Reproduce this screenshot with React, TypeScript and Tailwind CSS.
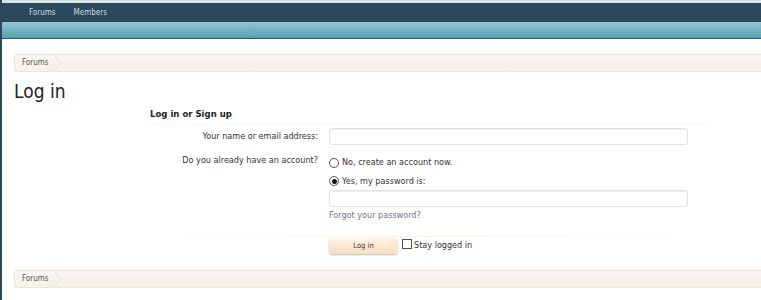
import React from "react";

function Crumb({ className = "" }: { className?: string }) {
  return (
    <div className={"flex items-center h-[18px] ml-[12px] rounded-l-[4px] border border-r-0 border-[#f2e4cf] bg-gradient-to-b from-[#f9f7f4] to-[#f3efe9] " + className}>
      <div className="relative flex items-center h-full pl-[7px] pr-[14px] text-[8px] text-[#555]">
        Forums
        <svg className="absolute right-0 top-0" width="10" height="16" viewBox="0 0 10 16">
          <path d="M1 0 L8 8 L1 16" fill="none" stroke="#efe6da" strokeWidth="1.2" />
        </svg>
      </div>
    </div>
  );
}

export default function App() {
  return (
    <div
      className="w-[761px] h-[300px] overflow-hidden bg-[#2b485c] pl-[2px]"
      style={{ fontFamily: '"DejaVu Sans Condensed", "DejaVu Sans", sans-serif' }}
    >
      <div className="h-[3px] bg-[#d8e3e8]" />
      <div className="h-[19px] bg-[#2b485c] rounded-tl-[6px] flex items-center text-[8px] text-[#cfdae1]">
        <span className="ml-[27px]">Forums</span>
        <span className="ml-[18px]">Members</span>
      </div>
      <div className="h-[17px] bg-gradient-to-b from-[#94c4d1] to-[#54a2b1] border-b-[1px] border-[#2b5566]" />
      <div className="bg-white h-[261px] pt-[15px]">
        <Crumb />
        <div className="ml-[12px] mt-[8px] text-[19px] leading-[22px] text-[#222]">Log in</div>
        <div className="ml-[148px] mt-[5px] w-[556px] text-[9.5px] font-bold text-[#222] pb-[3px] border-b border-[#faf6ef]">
          Log in or Sign up
        </div>
        <div className="mt-[3px] flex items-center text-[9px] text-[#333]">
          <div className="w-[316px] text-right pr-0">Your name or email address:</div>
          <div className="ml-[11px] w-[359px] h-[17px] rounded-[3px] border border-[#e2e2e2] shadow-[inset_0_1px_1px_#eee]" />
        </div>
        <div className="mt-[8px] flex text-[9px] text-[#333]">
          <div className="w-[316px] text-right pt-[1px]">Do you already have an account?</div>
          <div className="ml-[11px] flex flex-col">
            <div className="flex items-center h-[19px]">
              <span className="w-[10px] h-[10px] rounded-full border border-[#555] bg-white" />
              <span className="ml-[3px]">No, create an account now.</span>
            </div>
            <div className="flex items-center h-[18px]">
              <span className="w-[10px] h-[10px] rounded-full border border-[#555] bg-white flex items-center justify-center">
                <span className="w-[5px] h-[5px] rounded-full bg-[#111]" />
              </span>
              <span className="ml-[3px]">Yes, my password is:</span>
            </div>
            <div className="mt-[0px] w-[359px] h-[17px] rounded-[3px] border border-[#e2e2e2] shadow-[inset_0_1px_1px_#eee]" />
            <div className="mt-[2px] text-[#6b7b85]">Forgot your password?</div>
          </div>
        </div>
        <div className="ml-[143px] mt-[13px] w-[570px] h-[1px] bg-gradient-to-r from-white via-[#f9f1e4] to-white" />
        <div className="mt-[1px] ml-[327px] flex items-center text-[9px] text-[#333]">
          <div className="w-[69px] h-[16px] rounded-[4px] bg-gradient-to-b from-[#fff4e8] to-[#f9dcbd] shadow-[0_1px_2px_#bbb] flex items-center justify-center text-[7.5px] text-[#333]">
            Log in
          </div>
          <span className="ml-[4px] w-[10px] h-[10px] border border-[#555] bg-white self-start mt-[1px]" />
          <span className="ml-[2px]">Stay logged in</span>
        </div>
        <div className="mt-[16px]">
          <Crumb />
        </div>
      </div>
    </div>
  );
}
